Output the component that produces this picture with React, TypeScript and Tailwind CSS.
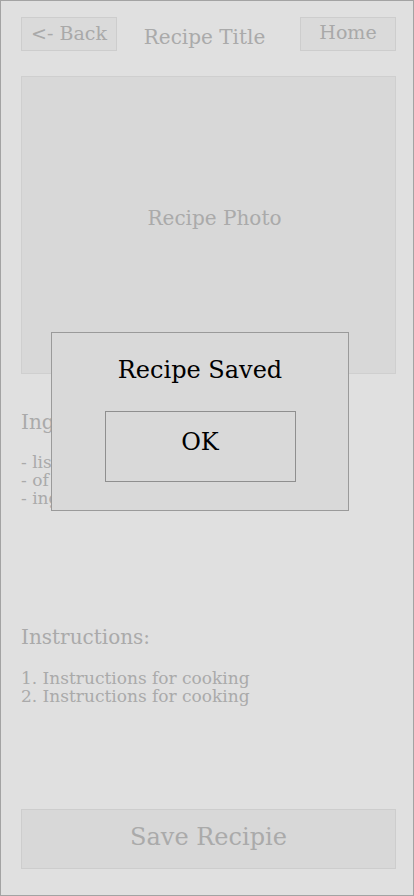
export default function App() {
  const font = { fontFamily: '"DejaVu Serif", serif' };
  return (
    <div
      className="relative w-[414px] h-[896px] border border-[#a3a3a3] bg-[#e0e0e0] overflow-hidden"
      style={font}
    >
      <div className="ml-[20px] w-[375px] pt-[16px]">
        {/* Top bar */}
        <div className="flex items-center justify-between h-[34px]">
          <button className="w-[96px] h-[34px] bg-[#dadada] border border-[#cdcdcd] text-[#a9a9a9] text-[19px] leading-none pb-[2px]">
            &lt;- Back
          </button>
          <div className="text-[#aaaaaa] text-[20px] leading-none pt-[5px] pr-[8px]">
            Recipe Title
          </div>
          <button className="w-[96px] h-[34px] bg-[#dadada] border border-[#cdcdcd] text-[#a9a9a9] text-[19px] leading-none pb-[4px]">
            Home
          </button>
        </div>

        {/* Photo */}
        <div className="mt-[25px] h-[298px] bg-[#d8d8d8] border border-[#cfcfcf] flex items-center justify-center">
          <span className="text-[#aaaaaa] text-[20px] mb-[14px] ml-[12px]">Recipe Photo</span>
        </div>

        {/* Ingredients */}
        <div className="mt-[36px] text-[#aaaaaa] text-[20px] leading-[24px]">
          Ingredients:
        </div>
        <div className="mt-[19px] text-[#aaaaaa] text-[17px] leading-[18px]">
          <div>- list</div>
          <div>- of</div>
          <div>- ingredients</div>
        </div>

        {/* Instructions */}
        <div className="mt-[118px] text-[#aaaaaa] text-[20px] leading-[24px]">
          Instructions:
        </div>
        <div className="mt-[20px] text-[#aaaaaa] text-[17px] leading-[18px]">
          <div>1. Instructions for cooking</div>
          <div>2. Instructions for cooking</div>
        </div>

        {/* Save */}
        <button className="mt-[104px] w-[375px] h-[60px] bg-[#d8d8d8] border border-[#cdcdcd] text-[#aaaaaa] text-[24px] leading-none pb-[4px]">
          Save Recipie
        </button>
      </div>

      {/* Modal */}
      <div className="absolute left-[50px] top-[331px] w-[298px] h-[179px] bg-[#d9d9d9] border border-[#9a9a9a] flex flex-col items-center">
        <div className="mt-[22px] text-black text-[24px] leading-[30px]">
          Recipe Saved
        </div>
        <button className="mt-[26px] w-[191px] h-[71px] border border-[#8f8f8f] text-black text-[24px] leading-none pb-[10px]">
          OK
        </button>
      </div>
    </div>
  );
}
